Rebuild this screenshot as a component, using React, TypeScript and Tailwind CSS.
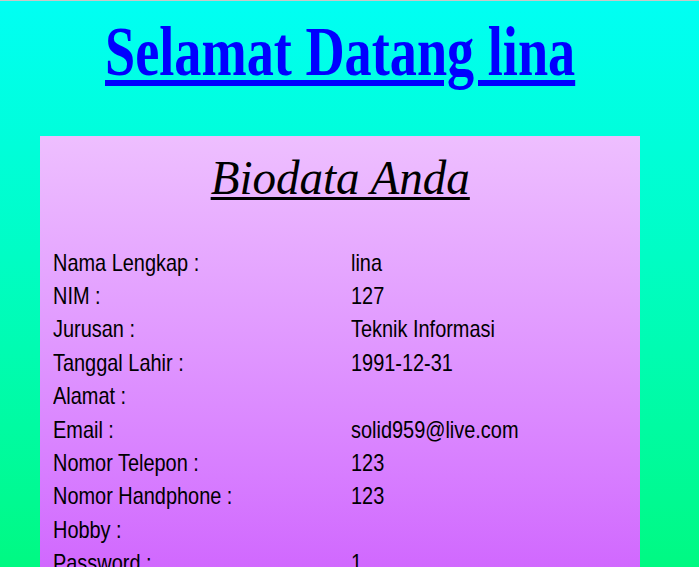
const rows = [
  ["Nama Lengkap :", "lina"],
  ["NIM :", "127"],
  ["Jurusan :", "Teknik Informasi"],
  ["Tanggal Lahir :", "1991-12-31"],
  ["Alamat :", ""],
  ["Email :", "solid959@live.com"],
  ["Nomor Telepon :", "123"],
  ["Nomor Handphone :", "123"],
  ["Hobby :", ""],
  ["Password :", "1"],
];

export default function App() {
  return (
    <div className="h-[567px] overflow-hidden border-t border-[#c8c8c8] bg-gradient-to-b from-[#00fff4] to-[#00f982] font-['Liberation_Sans',sans-serif] text-black">
      {/* Heading */}
      <h1 className="h-[135px] pl-[105px] pt-[12px] font-['Liberation_Serif',serif] text-[70px] leading-[78px] font-bold whitespace-nowrap text-[#0000ff]">
        <span className="inline-block origin-left scale-x-[0.775] underline decoration-[6px] underline-offset-[5px]">
          Selamat Datang lina
        </span>
      </h1>

      {/* Biodata panel */}
      <div className="mx-10 h-[440px] w-[600px] bg-gradient-to-b from-[#eebfff] to-[#d066fe] px-[13px] pt-[14px]">
        <h2 className="mb-[40px] text-center font-['Liberation_Serif',serif] text-[48px] leading-[56px] italic">
          <span className="inline-block scale-x-[0.98] underline decoration-[3px] underline-offset-[3px]">Biodata Anda</span>
        </h2>
        {rows.map(([label, value]) => (
          <div key={label} className="flex h-[33.4px] items-center text-[24px] whitespace-nowrap">
            <div className="w-[298px]">
              <span className="inline-block origin-left scale-x-[0.83]">{label}</span>
            </div>
            <div>
              <span className="inline-block origin-left scale-x-[0.83]">{value}</span>
            </div>
          </div>
        ))}
      </div>
    </div>
  );
}
